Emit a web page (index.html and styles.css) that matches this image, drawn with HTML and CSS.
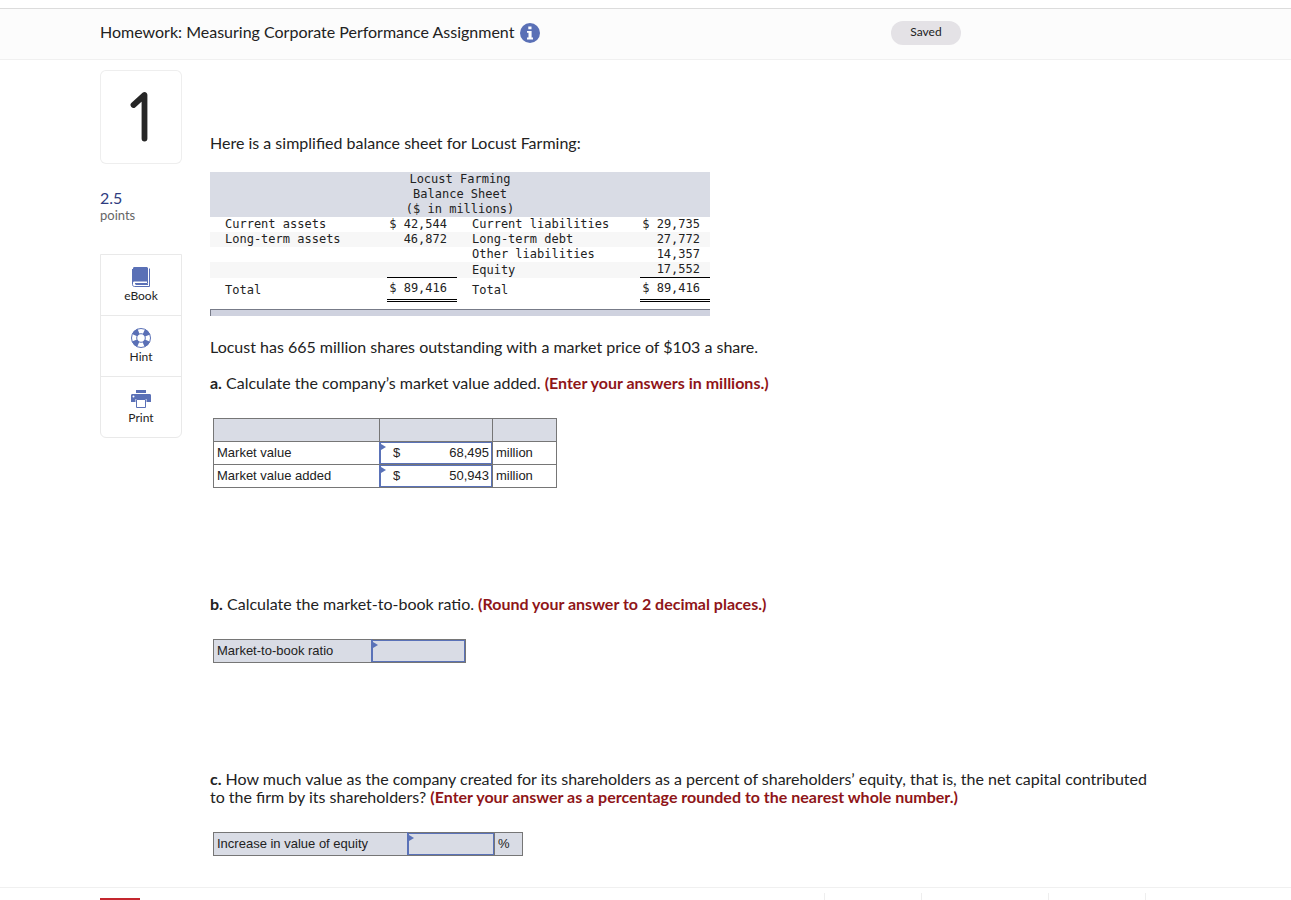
FILE: index.html
```html
<!DOCTYPE html>
<html lang="en">
<head>
<meta charset="utf-8">
<title>Homework: Measuring Corporate Performance Assignment</title>
<link rel="stylesheet" href="styles.css">
</head>
<body>
<header class="topbar">
  <h1 class="title">Homework: Measuring Corporate Performance Assignment</h1>
  <button class="info" type="button" aria-label="Assignment information">
    <svg viewBox="0 0 20 20" width="20" height="20"><circle cx="10" cy="10" r="10" fill="#5a70b6"/><path d="M8.3 3.4h3.2v2.8H8.3zM7 8h4.6v6.6h1.4v1.9H7v-1.9h1.5V9.8H7z" fill="#fff"/></svg>
  </button>
  <span class="saved">Saved</span>
</header>
<main class="page">
  <aside class="side">
    <div class="number" role="img" aria-label="Question 1">
      <svg viewBox="0 0 82 94" width="82" height="94"><path d="M33.500 35L44.500 25V68.500" fill="none" stroke="#262626" stroke-width="5.800" stroke-linecap="round" stroke-linejoin="round"/></svg>
    </div>
    <div class="score"><span class="score-value">2.5</span><span class="score-unit">points</span></div>
    <nav class="tools">
      <button class="tool" type="button">
        <svg viewBox="0 0 20 22" width="20" height="22"><path d="M3.500 1H16v14.500H3.700c-1 0-1.700.5-1.700 1V2.500C2 1.500 2.500 1 3.500 1z" fill="#5a70b6"/><path d="M1.500 3v15.500c0 1.200.8 2 2 2H18.500V2.500M16.500 1.500v16H4M4.500 18.500h12.500" fill="none" stroke="#5a70b6"/></svg>
        eBook
      </button>
      <button class="tool" type="button">
        <svg viewBox="0 0 20 22" width="20" height="22"><circle cx="10" cy="11" r="9.500" fill="none" stroke="#5a70b6"/><circle cx="10" cy="11" r="4.300" fill="none" stroke="#5a70b6"/><circle cx="10" cy="11" r="7" fill="none" stroke="#5a70b6" stroke-width="5.600" stroke-dasharray="5.500 5.496" stroke-dashoffset="-2.750"/></svg>
        Hint
      </button>
      <button class="tool" type="button">
        <svg viewBox="0 0 20 22" width="20" height="22"><path d="M5 2h10v3H5zM1.500 6h17c1 0 1.500.6 1.500 1.500V14h-4.500v-3h-11v3H0V7.500C0 6.600.5 6 1.500 6z" fill="#5a70b6"/><path d="M5.500 11.500h9v8h-9z" fill="#fff" stroke="#5a70b6"/><circle cx="2.500" cy="8.500" r="1" fill="#fff"/></svg>
        Print
      </button>
    </nav>
  </aside>
  <article class="content">
    <p class="intro">Here is a simplified balance sheet for Locust Farming:</p>
    <table class="sheet">
      <colgroup><col class="name-col"><col class="money-col"><col><col class="money-col"></colgroup>
      <thead><tr><th colspan="4">Locust Farming<br>Balance Sheet<br>($ in millions)</th></tr></thead>
      <tbody>
        <tr><td>Current assets</td><td class="money">$ 42,544</td><td>Current liabilities</td><td class="money">$ 29,735</td></tr>
        <tr class="shade"><td>Long-term assets</td><td class="money">46,872</td><td>Long-term debt</td><td class="money">27,772</td></tr>
        <tr><td></td><td></td><td>Other liabilities</td><td class="money">14,357</td></tr>
        <tr class="shade"><td></td><td class="money rule"></td><td>Equity</td><td class="money rule">17,552</td></tr>
        <tr class="total"><td>Total</td><td class="money">$ 89,416</td><td>Total</td><td class="money">$ 89,416</td></tr>
      </tbody>
    </table>
    <div class="sheet-bar"></div>
    <p class="facts">Locust has 665 million shares outstanding with a market price of $103 a share.</p>
    <section class="part">
      <p><b>a.</b> Calculate the company’s market value added. <strong>(Enter your answers in millions.)</strong></p>
      <table class="form form-a">
        <colgroup><col class="a-label"><col class="a-entry"><col></colgroup>
        <tr class="shaded"><td></td><td></td><td></td></tr>
        <tr><td class="prompt"><label for="mv">Market value</label></td><td class="entry"><div class="field"><span class="dollar">$</span><input id="mv" type="text" value="68,495"></div></td><td>million</td></tr>
        <tr><td class="prompt"><label for="mva">Market value added</label></td><td class="entry"><div class="field"><span class="dollar">$</span><input id="mva" type="text" value="50,943"></div></td><td>million</td></tr>
      </table>
    </section>
    <section class="part">
      <p><b>b.</b> Calculate the market-to-book ratio. <strong>(Round your answer to 2 decimal places.)</strong></p>
      <table class="form form-b">
        <colgroup><col class="b-label"><col></colgroup>
        <tr class="shaded"><td class="prompt"><label for="ratio">Market-to-book ratio</label></td><td class="entry"><div class="field"><input id="ratio" type="text"></div></td></tr>
      </table>
    </section>
    <section class="part">
      <p><b>c.</b> How much value as the company created for its shareholders as a percent of shareholders’ equity, that is, the net capital contributed<br>to the firm by its shareholders? <strong>(Enter your answer as a percentage rounded to the nearest whole number.)</strong></p>
      <table class="form form-c">
        <colgroup><col class="c-label"><col class="c-entry"><col></colgroup>
        <tr class="shaded"><td class="prompt"><label for="inc">Increase in value of equity</label></td><td class="entry"><div class="field"><input id="inc" type="text"></div></td><td>%</td></tr>
      </table>
    </section>
  </article>
</main>
<footer class="bottom">
  <div class="brand"></div>
  <div class="pager"><span class="slot"></span><span class="slot wide"></span><span class="slot"></span></div>
</footer>
</body>
</html>
```
FILE: styles.css
```css
* { box-sizing: border-box; }
body {
  margin: 0;
  padding-top: 8px;
  height: 100vh;
  display: flex;
  flex-direction: column;
  overflow: hidden;
  background: #fff;
  color: #222;
  font: 16px/18px Lato, sans-serif;
}
p { margin: 0; }
button { font: inherit; color: inherit; background: none; border: 0; padding: 0; }
svg { display: block; }
.topbar {
  flex: none;
  display: flex;
  align-items: center;
  height: 52px;
  padding: 0 330px 2px 100px;
  background: #fcfcfc;
  border-top: 1px solid #dcdcdc;
  border-bottom: 1px solid #f0f0f0;
}
.title { margin: 0; padding-bottom: 2px; font-size: 16px; font-weight: 400; white-space: nowrap; }
.info { margin-left: 6px; }
.saved {
  margin-left: auto;
  width: 70px;
  height: 24px;
  border-radius: 12px;
  background: #e4e2e6;
  font-size: 12px;
  line-height: 22px;
  text-align: center;
}
.page {
  flex: 1;
  min-height: 0;
  display: grid;
  grid-template-columns: 82px minmax(0, 1fr);
  column-gap: 28px;
  padding: 10px 100px 0;
  overflow: hidden;
}
.number { border-radius: 6px; box-shadow: inset 0 0 0 1px #eee; }
.score { display: flex; flex-direction: column; margin: 25px 0 31px; }
.score-value { color: #2f3c80; font-size: 16px; line-height: 18px; }
.score-unit { color: #666; font-size: 13px; line-height: 16px; }
.tools { border: 1px solid #e9e9e9; border-radius: 0 0 6px 6px; }
.tool {
  display: flex;
  flex-direction: column;
  align-items: center;
  width: 100%;
  height: 60px;
  padding-top: 11px;
  font-size: 12px;
  line-height: 16px;
}
.tool + .tool { height: 61px; border-top: 1px solid #e9e9e9; }
.content { padding-top: 64px; }
.sheet {
  width: 500px;
  margin-top: 20px;
  table-layout: fixed;
  border-collapse: separate;
  border-spacing: 0;
  font: 12px/15px "DejaVu Sans Mono", monospace;
}
.name-col { width: 177px; }
.money-col { width: 70px; }
.sheet th { padding: 0; background: #d9dce5; font-weight: 400; }
.sheet td { padding: 0 0 0 15px; height: 15px; white-space: nowrap; }
.sheet .money { padding: 0 10px 0 0; text-align: right; }
.sheet .rule { border-bottom: 1px solid #000; }
.shade td { background: #f7f7f7; }
.total td { height: 24px; }
.total .money { border-bottom: 3px double #000; }
.sheet-bar { width: 500px; height: 7px; margin-top: 7px; background: #cfd2df; border: solid #777b88; border-width: 1px 0 0 1px; }
.facts { margin: 22px 0 18px; }
.part strong { color: #8f1518; }
.form {
  margin: 26px 0 0 3px;
  table-layout: fixed;
  border-collapse: collapse;
  font: 13px/16px "Liberation Sans", sans-serif;
}
.form td { height: 23px; padding: 0 3px; border: 1px solid #767676; }
.form .prompt { border-right-color: #5a72b8; }
.form .entry { padding: 0; }
.shaded { background: #d9dce5; }
.form-a { width: 344px; }
.form-b { width: 253px; }
.form-c { width: 310px; }
.a-label { width: 166px; }
.a-entry { width: 113px; }
.b-label { width: 158px; }
.c-label { width: 194px; }
.c-entry { width: 87px; }
.part + .part { margin-top: 107px; }
.field {
  position: relative;
  display: flex;
  align-items: center;
  height: 22px;
  border: 1px solid #5a72b8;
}
.field::before {
  content: "";
  position: absolute;
  top: 1px;
  left: 0;
  border: solid transparent;
  border-width: 3px 0 3px 5px;
  border-left-color: #5a72b8;
}
.dollar { padding-left: 12px; }
.field input {
  flex: 1;
  min-width: 0;
  width: 100%;
  padding: 0 2px 0 0;
  border: 0;
  outline: 0;
  background: transparent;
  color: inherit;
  font: inherit;
  text-align: right;
}
.bottom {
  flex: none;
  display: flex;
  justify-content: space-between;
  height: 13px;
  padding: 0 145px 0 100px;
  border-top: 1px solid #f0f0f0;
}
.brand { width: 40px; height: 2px; margin-top: 10px; background: #c4262e; }
.pager { display: flex; margin-top: 5px; border-left: 1px solid #eee; }
.slot { width: 97px; border-right: 1px solid #eee; }
.wide { width: 127px; }
```
